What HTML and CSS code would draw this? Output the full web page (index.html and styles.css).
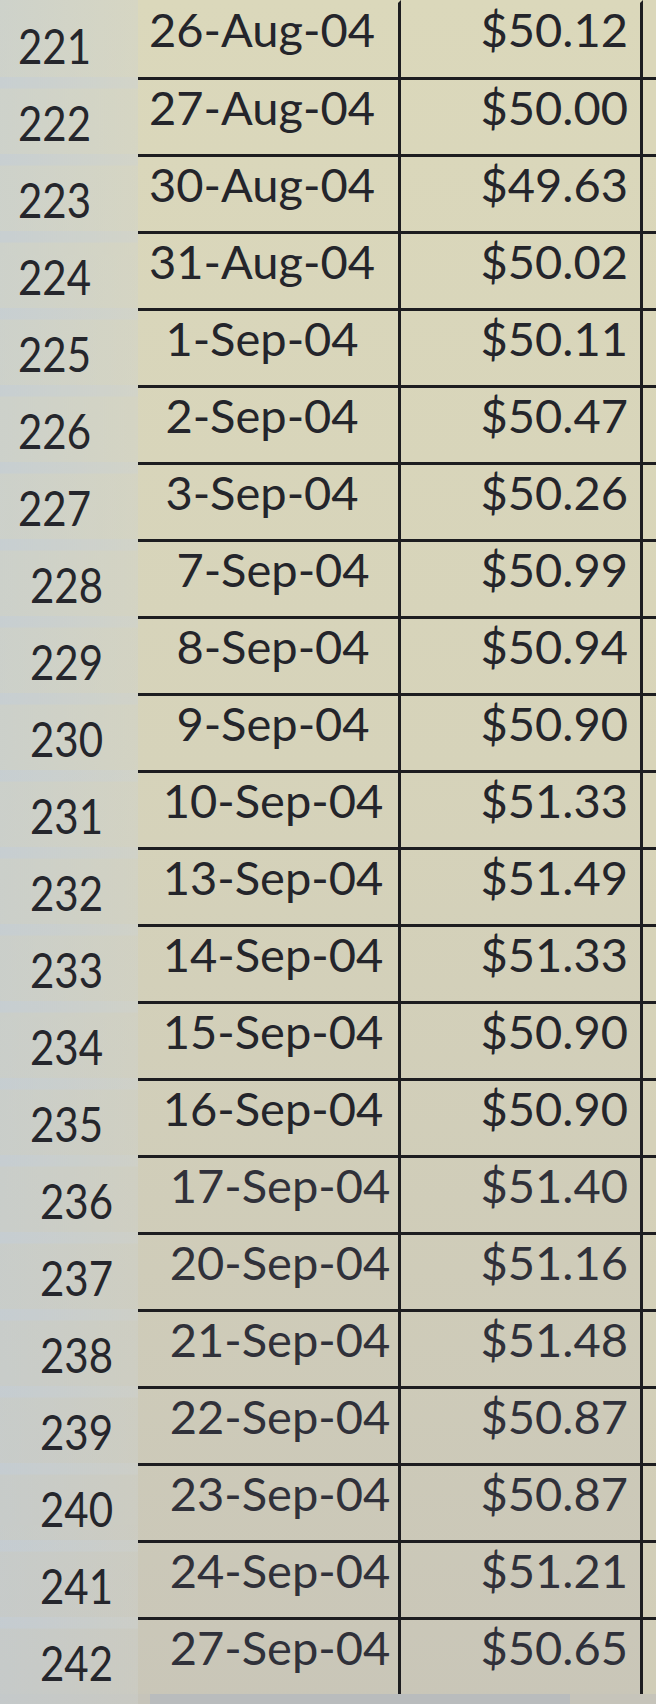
FILE: index.html
```html
<!DOCTYPE html>
<html>
<head>
<meta charset="utf-8">
<link rel="stylesheet" href="styles.css">
</head>
<body>
<div class="screen">
  <div class="sheet">
    <div class="rh">221</div><div class="c date">26-Aug-04</div><div class="c price">$50.12</div><div class="c extra"></div>
    <div class="rh">222</div><div class="c date">27-Aug-04</div><div class="c price">$50.00</div><div class="c extra"></div>
    <div class="rh">223</div><div class="c date">30-Aug-04</div><div class="c price">$49.63</div><div class="c extra"></div>
    <div class="rh">224</div><div class="c date">31-Aug-04</div><div class="c price">$50.02</div><div class="c extra"></div>
    <div class="rh">225</div><div class="c date">1-Sep-04</div><div class="c price">$50.11</div><div class="c extra"></div>
    <div class="rh">226</div><div class="c date">2-Sep-04</div><div class="c price">$50.47</div><div class="c extra"></div>
    <div class="rh">227</div><div class="c date">3-Sep-04</div><div class="c price">$50.26</div><div class="c extra"></div>
    <div class="rh">228</div><div class="c date">7-Sep-04</div><div class="c price">$50.99</div><div class="c extra"></div>
    <div class="rh">229</div><div class="c date">8-Sep-04</div><div class="c price">$50.94</div><div class="c extra"></div>
    <div class="rh">230</div><div class="c date">9-Sep-04</div><div class="c price">$50.90</div><div class="c extra"></div>
    <div class="rh">231</div><div class="c date">10-Sep-04</div><div class="c price">$51.33</div><div class="c extra"></div>
    <div class="rh">232</div><div class="c date">13-Sep-04</div><div class="c price">$51.49</div><div class="c extra"></div>
    <div class="rh">233</div><div class="c date">14-Sep-04</div><div class="c price">$51.33</div><div class="c extra"></div>
    <div class="rh">234</div><div class="c date">15-Sep-04</div><div class="c price">$50.90</div><div class="c extra"></div>
    <div class="rh">235</div><div class="c date">16-Sep-04</div><div class="c price">$50.90</div><div class="c extra"></div>
    <div class="rh">236</div><div class="c date">17-Sep-04</div><div class="c price">$51.40</div><div class="c extra"></div>
    <div class="rh">237</div><div class="c date">20-Sep-04</div><div class="c price">$51.16</div><div class="c extra"></div>
    <div class="rh">238</div><div class="c date">21-Sep-04</div><div class="c price">$51.48</div><div class="c extra"></div>
    <div class="rh">239</div><div class="c date">22-Sep-04</div><div class="c price">$50.87</div><div class="c extra"></div>
    <div class="rh">240</div><div class="c date">23-Sep-04</div><div class="c price">$50.87</div><div class="c extra"></div>
    <div class="rh">241</div><div class="c date">24-Sep-04</div><div class="c price">$51.21</div><div class="c extra"></div>
    <div class="rh">242</div><div class="c date">27-Sep-04</div><div class="c price">$50.65</div><div class="c extra"></div>
  </div>
  <div class="bottom"><div class="scrollbar"></div></div>
</div>
</body>
</html>
```
FILE: styles.css
```css
html, body {
  margin: 0;
  padding: 0;
}
body {
  width: 656px;
  height: 1704px;
  overflow: hidden;
  background: #c4c3b8;
  font-family: Lato, "Open Sans", sans-serif;
}
.screen {
  width: 656px;
  height: 1704px;
  display: flex;
  flex-direction: column;
  background: linear-gradient(180deg, #dbd8bb 0%, #d6d3ba 45%, #c9c6b8 100%);
}
.sheet {
  display: grid;
  grid-template-columns: 138px 263px 242px 13px;
  grid-auto-rows: 77px;
}
.rh {
  background: linear-gradient(90deg, rgba(195,205,215,0.55), rgba(205,210,210,0.35));
  color: #25262c;
  font-size: 42px;
  line-height: 1;
  padding: 19px 0 0 18px;
  box-sizing: border-box;
  transform: scaleY(1.15);
  transform-origin: top left;
}
.rh:nth-child(n+29) {
  padding-left: 30px;
}
.rh:nth-child(n+61) {
  padding-left: 40px;
}
.c {
  box-sizing: border-box;
  border-top: 3px solid #1d1d20;
  color: #24252b;
  font-size: 47px;
  line-height: 1;
  padding-top: 4px;
}
.sheet > .c:nth-child(-n+4) {
  border-top-color: transparent;
  padding-top: 3px;
}
.sheet > .c:nth-child(n+61) {
  color: #30313a;
}
.date {
  text-align: center;
  border-right: 3px solid #1d1d20;
  padding-right: 12px;
}
.date:nth-child(n+30) {
  padding-right: 0;
  padding-left: 10px;
}
.date:nth-child(n+62) {
  padding-left: 24px;
}
.price {
  text-align: right;
  padding-right: 12px;
  border-right: 3px solid #1d1d20;
}
.extra {
  background: rgba(220, 215, 185, 0.4);
}
.bottom {
  flex: 1;
  display: flex;
  align-items: flex-end;
  padding-left: 150px;
  background: #c6c4ba;
}
.scrollbar {
  width: 420px;
  height: 12px;
  background: #b9bcbd;
}
```
